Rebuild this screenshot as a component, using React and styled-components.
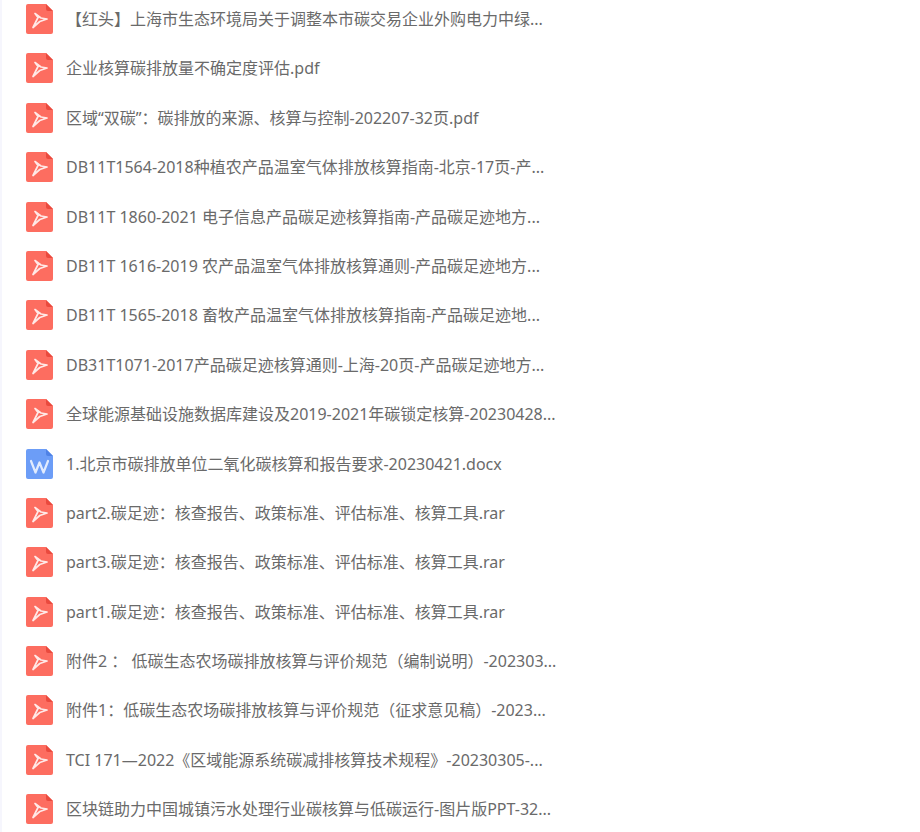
import React from 'react';
import styled, { createGlobalStyle } from 'styled-components';

const Global = createGlobalStyle`
  html, body { margin: 0; padding: 0; background: #fff; }
  body { font-family: "Noto Sans", "Noto Sans CJK SC", sans-serif; }
`;
const Page = styled.div`
  width: 920px; height: 832px; overflow: hidden; box-sizing: border-box;
  border-left: 2px solid #f6f6fd; padding: 4px 0 0 24px; background: #fff;
`;
const List = styled.ul`
  list-style: none; margin: 0; padding: 0; display: flex; flex-direction: column; 
`;
const Row = styled.li`
  height: 49.4px; display: flex; align-items: flex-start; gap: 13px;
`;
const Name = styled.span`
  font-size: 16px; line-height: 30px; color: #6a6a6a; white-space: nowrap;
`;
const IconSvg = styled.svg`
  width: 27px; height: 30px; flex: none; display: block;
`;

function FileIcon({ type }) {
  const body = type === 'word' ? '#6c9df7' : '#fd6d60';
  const fold = type === 'word' ? '#4f82e6' : '#ea4a3e';
  return (
    <IconSvg viewBox="0 0 27 30">
      <path d="M2 0H20L27 7V28a2 2 0 0 1-2 2H2a2 2 0 0 1-2-2V2a2 2 0 0 1 2-2Z" fill={body} />
      <path d="M20 0L27 7H22a2 2 0 0 1-2-2Z" fill={fold} />
      {type === 'word' ? (
        <path d="M5 12L9.5 23.5L13.5 13.5L17.5 23.5L22 12" fill="none" stroke="#fff" strokeOpacity=".8" strokeWidth="2.2" strokeLinejoin="round" strokeLinecap="round" />
      ) : (
        <path d="M9 9.5L15 14L21 15L13.8 17.5L7 23.5L12 13.5Z" fill="none" stroke="#fff" strokeOpacity=".85" strokeWidth="1.7" strokeLinejoin="round" />
      )}
    </IconSvg>
  );
}

const files = [
  ['pdf', '【红头】上海市生态环境局关于调整本市碳交易企业外购电力中绿...'],
  ['pdf', '企业核算碳排放量不确定度评估.pdf'],
  ['pdf', '区域“双碳”：碳排放的来源、核算与控制-202207-32页.pdf'],
  ['pdf', 'DB11T1564-2018种植农产品温室气体排放核算指南-北京-17页-产...'],
  ['pdf', 'DB11T 1860-2021 电子信息产品碳足迹核算指南-产品碳足迹地方...'],
  ['pdf', 'DB11T 1616-2019 农产品温室气体排放核算通则-产品碳足迹地方...'],
  ['pdf', 'DB11T 1565-2018 畜牧产品温室气体排放核算指南-产品碳足迹地...'],
  ['pdf', 'DB31T1071-2017产品碳足迹核算通则-上海-20页-产品碳足迹地方...'],
  ['pdf', '全球能源基础设施数据库建设及2019-2021年碳锁定核算-20230428...'],
  ['word', '1.北京市碳排放单位二氧化碳核算和报告要求-20230421.docx'],
  ['pdf', 'part2.碳足迹：核查报告、政策标准、评估标准、核算工具.rar'],
  ['pdf', 'part3.碳足迹：核查报告、政策标准、评估标准、核算工具.rar'],
  ['pdf', 'part1.碳足迹：核查报告、政策标准、评估标准、核算工具.rar'],
  ['pdf', '附件2 ： 低碳生态农场碳排放核算与评价规范（编制说明）-202303...'],
  ['pdf', '附件1：低碳生态农场碳排放核算与评价规范（征求意见稿）-2023...'],
  ['pdf', 'TCI 171—2022《区域能源系统碳减排核算技术规程》-20230305-...'],
  ['pdf', '区块链助力中国城镇污水处理行业碳核算与低碳运行-图片版PPT-32...'],
];

export default function App() {
  return (
    <>
      <Global />
      <Page>
        <List>
          {files.map(([t, n]) => (
            <Row key={n}>
              <FileIcon type={t} />
              <Name>{n}</Name>
            </Row>
          ))}
        </List>
      </Page>
    </>
  );
}
